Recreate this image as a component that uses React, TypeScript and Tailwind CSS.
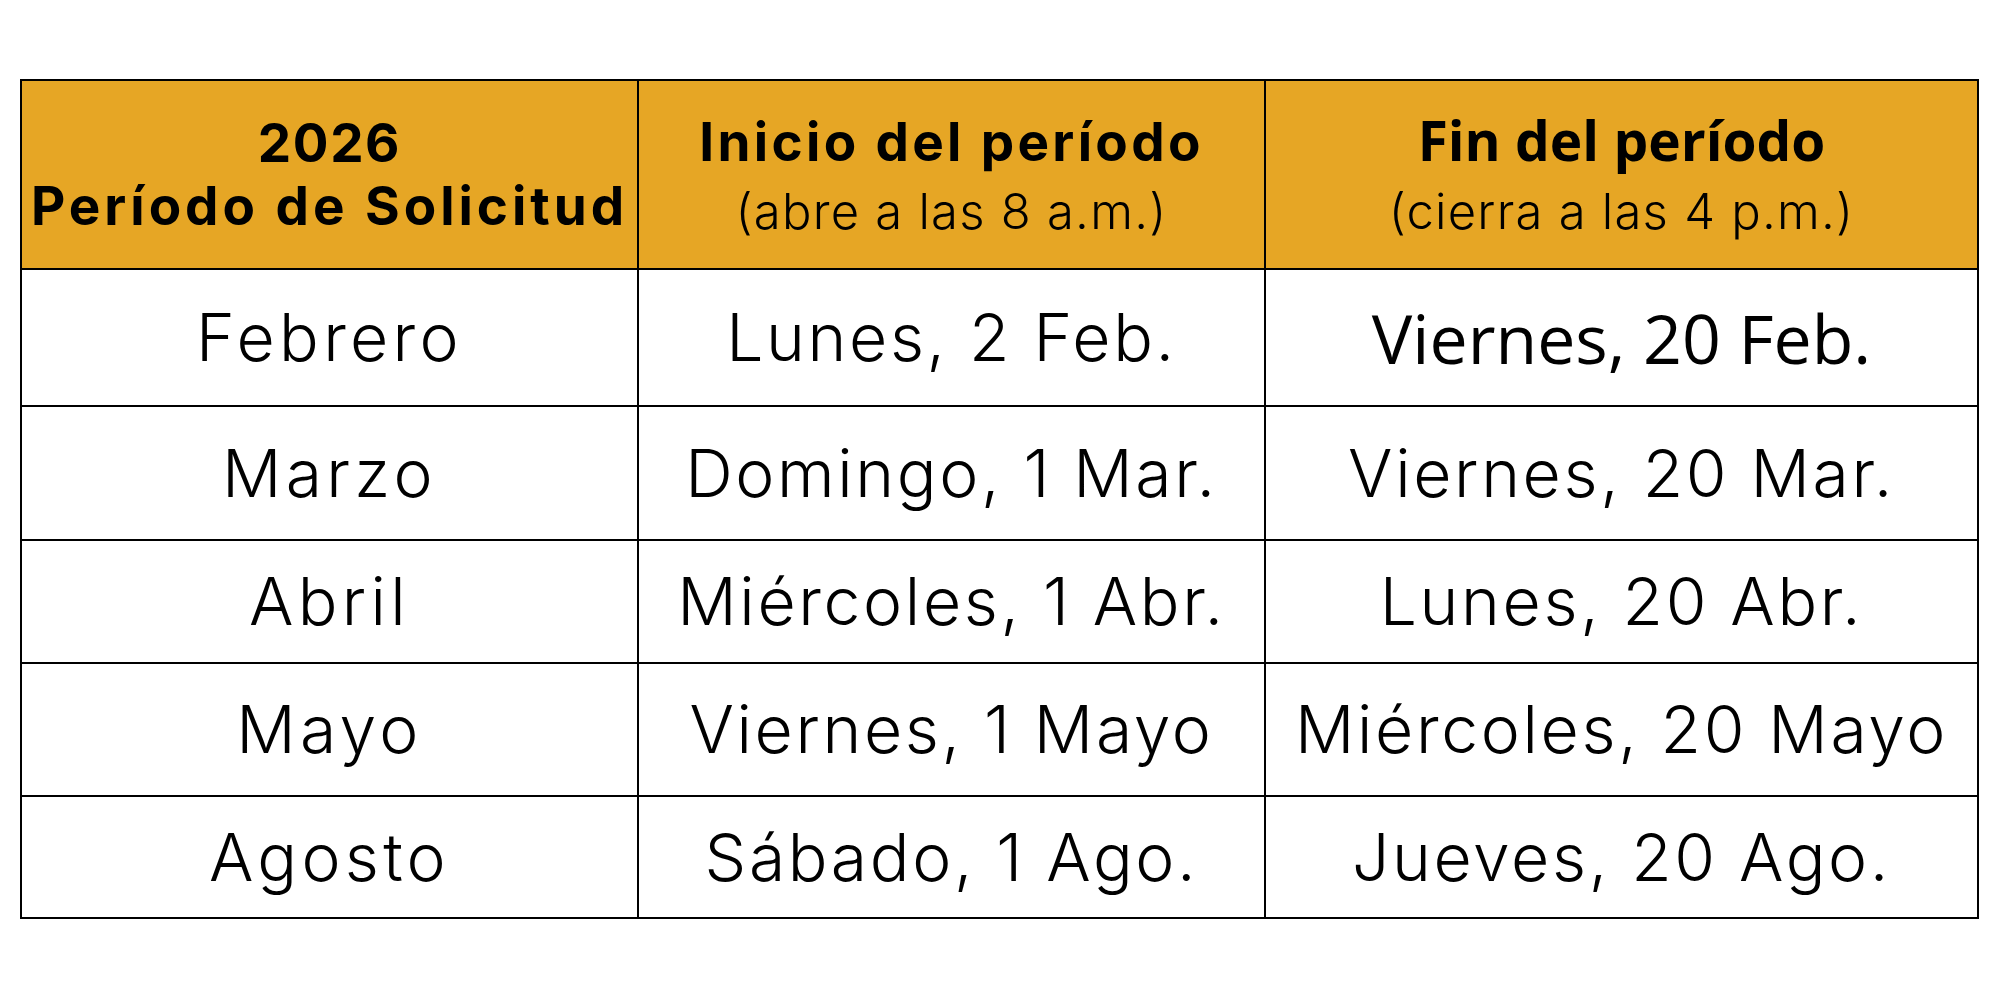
import React from "react";

type Row = {
  month: string;
  start: string;
  end: string;
  endAlt?: boolean;
  h: string;
};

const rows: Row[] = [
  { month: "Febrero", start: "Lunes, 2 Feb.", end: "Viernes, 20 Feb.", endAlt: true, h: "h-[137px]" },
  { month: "Marzo", start: "Domingo, 1 Mar.", end: "Viernes, 20 Mar.", h: "h-[134px]" },
  { month: "Abril", start: "Miércoles, 1 Abr.", end: "Lunes, 20 Abr.", h: "h-[123px]" },
  { month: "Mayo", start: "Viernes, 1 Mayo", end: "Miércoles, 20 Mayo", h: "h-[133px]" },
  { month: "Agosto", start: "Sábado, 1 Ago.", end: "Jueves, 20 Ago.", h: "h-[122px]" },
];

const body = "font-['Inter',sans-serif] font-light text-[66px] text-black tracking-[0.04em]";
const cell = "flex items-center justify-center border-r-2 border-b-2 border-black whitespace-nowrap";
const head = "flex flex-col items-center justify-start h-[189px] pt-[31px] border-r-2 border-b-2 border-black bg-[#e6a625] text-black whitespace-nowrap";

export default function App() {
  return (
    <div className="min-h-screen w-full bg-white pt-[79px] pl-[20px]">
      <div className="grid w-fit grid-cols-[617px_627px_713px] border-l-2 border-t-2 border-black">
        {/* Header */}
        <div className={`${head} font-['Inter',sans-serif] font-bold text-[53px] leading-[63px]`}>
          <span className="tracking-[0.03em]">2026</span>
          <span className="tracking-[0.075em]">Período de Solicitud</span>
        </div>
        <div className={`${head} font-['Inter',sans-serif]`}>
          <span className="text-[53px] font-bold leading-[60px] tracking-[0.063em]">Inicio del período</span>
          <span className="mt-[10px] text-[49px] font-light leading-[60px] tracking-[0.025em]">(abre a las 8 a.m.)</span>
        </div>
        <div className={head}>
          <span className="font-['Open_Sans',sans-serif] text-[55px] font-bold leading-[56px]">Fin del período</span>
          <span className="mt-[14px] font-['Inter',sans-serif] text-[49px] font-light leading-[60px] tracking-[0.025em]">
            (cierra a las 4 p.m.)
          </span>
        </div>

        {rows.map((r) => (
          <React.Fragment key={r.month}>
            <div className={`${cell} ${r.h} ${body} tracking-[0.065em]`}>{r.month}</div>
            <div className={`${cell} ${r.h} ${body}`}>{r.start}</div>
            <div
              className={`${cell} ${r.h} ${
                r.endAlt ? "font-['Open_Sans',sans-serif] text-[68px] text-black" : body
              }`}
            >
              {r.end}
            </div>
          </React.Fragment>
        ))}
      </div>
    </div>
  );
}
